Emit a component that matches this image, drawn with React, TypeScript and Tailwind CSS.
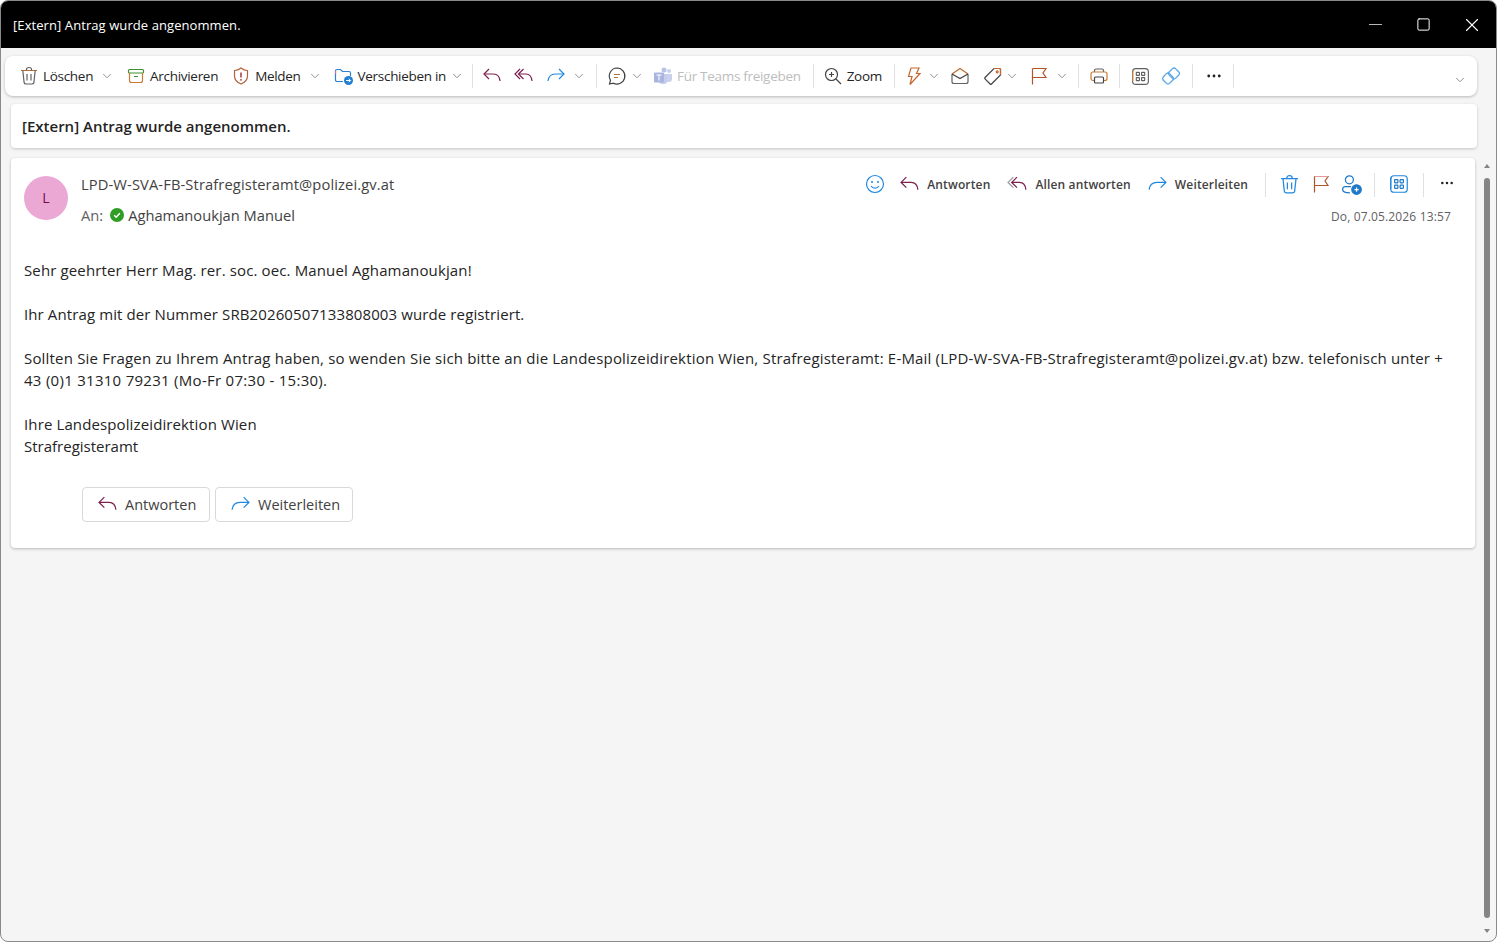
import React from "react";
import { Minus, Square, X, ChevronDown, MoreHorizontal } from "lucide-react";

const Sep = ({ ml, mr }: { ml: string; mr: string }) => (
  <div className={`h-[24px] w-px shrink-0 bg-[#e0e0e0] ${ml} ${mr}`} />
);

const Chev = ({ className = "" }: { className?: string }) => (
  <ChevronDown className={`w-[14px] h-[14px] shrink-0 text-[#616161] ${className}`} strokeWidth={1.2} />
);

const Trash = ({ className = "", stroke = "#616161", accent = "#b5713a" }: { className?: string; stroke?: string; accent?: string }) => (
  <svg viewBox="0 0 20 20" fill="none" className={className} strokeWidth="1.2">
    <path d="M2 4.500h16" stroke={accent} />
    <path d="M7.500 4.500V3.500a2.500 2 0 0 1 5 0v1" stroke={stroke} />
    <path d="M3.800 4.500l1.300 12a2 2 0 0 0 2 1.500h5.800a2 2 0 0 0 2-1.500l1.300-12" stroke={stroke} />
    <path d="M8 8v6.500M12 8v6.500" stroke={stroke} />
  </svg>
);

const Archive = ({ className = "" }: { className?: string }) => (
  <svg viewBox="0 0 20 20" fill="none" className={className} strokeWidth="1.2">
    <rect x="2.500" y="3.500" width="15" height="3.500" rx="1" stroke="#3f8f2f" />
    <path d="M3.500 7v7.500a2 2 0 0 0 2 2h9a2 2 0 0 0 2-2V7" stroke="#c77a34" />
    <path d="M8 10.500h4" stroke="#3f8f2f" />
  </svg>
);

const Shield = ({ className = "" }: { className?: string }) => (
  <svg viewBox="0 0 20 20" fill="none" className={className} strokeWidth="1.2">
    <path d="M10 2c2 1.700 4 2.500 6.500 2.500V10c0 3.600-2.200 6.200-6.500 8C5.700 16.200 3.500 13.600 3.500 10V4.500C6 4.500 8 3.700 10 2z" stroke="#b5613c" />
    <path d="M10 6.500v5" stroke="#a4262c" strokeWidth="1.400" />
    <circle cx="10" cy="13.800" r=".85" fill="#a4262c" />
  </svg>
);

const MoveFolder = ({ className = "" }: { className?: string }) => (
  <svg viewBox="0 0 20 20" fill="none" className={className} strokeWidth="1.2">
    <path d="M1.500 5a1.500 1.500 0 0 1 1.500-1.500h3.500L8.500 5.500H15A1.500 1.500 0 0 1 16.500 7v3M1.500 5v9A1.500 1.500 0 0 0 3 15.500h6" stroke="#2f80d0" />
    <path d="M1.500 5v3" stroke="#c07ab0" />
    <circle cx="14.500" cy="14.500" r="4.500" fill="#1f7fd4" />
    <path d="M12 14.500h4.500M14.800 12.700l1.800 1.800-1.800 1.800" stroke="#fff" strokeWidth="1" />
  </svg>
);

const Reply = ({ className = "", color = "#7d1f4f" }: { className?: string; color?: string }) => (
  <svg viewBox="0 0 20 20" fill="none" className={className} strokeWidth="1.200">
    <path d="M7 3L2 8l5 5" stroke={color} />
    <path d="M2 8h9.500c3.500 0 6 2 6.500 7" stroke={color} />
  </svg>
);

const ReplyAll = ({ className = "", back = "#7d1f4f", color = "#7d1f4f" }: { className?: string; back?: string; color?: string }) => (
  <svg viewBox="0 0 20 20" fill="none" className={className} strokeWidth="1.200">
    <path d="M6 3L1 8l5 5" stroke={back} />
    <path d="M9.500 3l-5 5 5 5" stroke={color} />
    <path d="M4.500 8h7.500c3.500 0 5.500 2 6 7" stroke={color} />
  </svg>
);

const Forward = ({ className = "" }: { className?: string }) => (
  <svg viewBox="0 0 20 20" fill="none" className={className} strokeWidth="1.200">
    <path d="M13 3l5 5-5 5" stroke="#1f88e0" />
    <path d="M18 8h-8.500C5.500 8 2.500 10.500 2 15" stroke="#1f88e0" />
  </svg>
);

const Chat = ({ className = "" }: { className?: string }) => (
  <svg viewBox="0 0 20 20" fill="none" className={className} strokeWidth="1.200">
    <path d="M10 2a8 8 0 1 1-3.600 15.200L2.500 18l1-3.800A8 8 0 0 1 10 2z" stroke="#424242" />
    <path d="M7 8.500h6M7 11.500h4" stroke="#b5713a" />
  </svg>
);

const Teams = ({ className = "" }: { className?: string }) => (
  <svg viewBox="0 0 20 20" className={className}>
    <circle cx="11" cy="4" r="2.500" fill="#b9c3e6" />
    <circle cx="16" cy="5" r="2" fill="#c9d1ee" />
    <path d="M13 8h6v5a3 3 0 0 1-3 3h-3z" fill="#c9d1ee" />
    <path d="M6 8h8v7a3 3 0 0 1-3 3H9a3 3 0 0 1-3-3z" fill="#c4cdeb" />
    <rect x="1" y="6.500" width="10" height="10" rx="1" fill="#a9b5e0" />
    <path d="M3.500 9h5M6 9v5.500" stroke="#fff" strokeWidth="1" />
  </svg>
);

const ZoomIcon = ({ className = "" }: { className?: string }) => (
  <svg viewBox="0 0 20 20" fill="none" className={className} strokeWidth="1.200" stroke="#424242">
    <circle cx="8.500" cy="8.500" r="6" />
    <path d="M13 13l5 5M8.500 6v5M6 8.500h5" />
  </svg>
);

const Bolt = ({ className = "" }: { className?: string }) => (
  <svg viewBox="0 0 20 20" fill="none" className={className} strokeWidth="1.200">
    <path d="M7 2h8l-2.500 5.500H16L6 18.500l2-8H4.500z" stroke="#c4682e" />
  </svg>
);

const OpenMail = ({ className = "" }: { className?: string }) => (
  <svg viewBox="0 0 20 20" fill="none" className={className} strokeWidth="1.200">
    <path d="M2 8v7.500a2 2 0 0 0 2 2h12a2 2 0 0 0 2-2V8" stroke="#616161" />
    <path d="M2 8l8-5.500L18 8" stroke="#c4682e" />
    <path d="M2 8l8 4.500L18 8" stroke="#424242" />
  </svg>
);

const Tag = ({ className = "" }: { className?: string }) => (
  <svg viewBox="0 0 20 20" fill="none" className={className} strokeWidth="1.200">
    <path d="M11 2.500h5.500a1 1 0 0 1 1 1V9l-9 9a1 1 0 0 1-1.400 0L2 12.900a1 1 0 0 1 0-1.400z" stroke="#424242" />
    <path d="M11 2.500h5.500a1 1 0 0 1 1 1V9" stroke="#c4682e" />
    <circle cx="14.200" cy="5.800" r="1" stroke="#c4682e" />
  </svg>
);

const Flag = ({ className = "", top = "#b0562a" }: { className?: string; top?: string }) => (
  <svg viewBox="0 0 20 20" fill="none" className={className} strokeWidth="1.200">
    <path d="M3.500 18.500V2.500" stroke="#b0562a" />
    <path d="M3.500 2.500H17l-3 4.500 3 4.500H3.500" stroke="#b0562a" />
    <path d="M4 2.500H17" stroke={top} />
  </svg>
);

const Printer = ({ className = "" }: { className?: string }) => (
  <svg viewBox="0 0 20 20" fill="none" className={className} strokeWidth="1.200">
    <path d="M5.500 6V4.500A1.500 1.500 0 0 1 7 3h6a1.500 1.500 0 0 1 1.500 1.500V6" stroke="#616161" />
    <path d="M5.500 14.500H4a2 2 0 0 1-2-2V8a2 2 0 0 1 2-2h12a2 2 0 0 1 2 2v4.500a2 2 0 0 1-2 2h-1.500" stroke="#c77a34" />
    <rect x="5.500" y="11" width="9" height="6" rx="1" stroke="#424242" />
  </svg>
);

const Apps = ({ className = "", stroke = "#616161", accent = "#c77a34", inner = "#616161" }: { className?: string; stroke?: string; accent?: string; inner?: string }) => (
  <svg viewBox="0 0 20 20" fill="none" className={className} strokeWidth="1.100">
    <rect x="2.500" y="2.500" width="15" height="15" rx="3" stroke={stroke} />
    <path d="M2.500 14.500v-9a3 3 0 0 1 .8-2" stroke={accent} />
    <rect x="6" y="6" width="3" height="3" rx=".5" stroke={inner} />
    <rect x="11" y="6" width="3" height="3" rx=".5" stroke={inner} />
    <rect x="6" y="11" width="3" height="3" rx=".5" stroke={inner} />
    <rect x="11" y="11" width="3" height="3" rx=".5" stroke={inner} />
  </svg>
);

const Loop = ({ className = "" }: { className?: string }) => (
  <svg viewBox="0 0 20 20" fill="none" className={className} strokeWidth="1.300" stroke="#5aa8ea">
    <rect x="8.500" y="3" width="9" height="9" rx="2.500" transform="rotate(45 13 7.500)" />
    <rect x="2.500" y="8" width="9" height="9" rx="2.500" transform="rotate(45 7 12.500)" />
  </svg>
);

const Smile = ({ className = "" }: { className?: string }) => (
  <svg viewBox="0 0 20 20" fill="none" className={className} strokeWidth="1.200" stroke="#1f88e0">
    <circle cx="10" cy="10" r="8.500" />
    <path d="M6 12c1 1.500 2.400 2.200 4 2.200s3-.7 4-2.200" />
    <circle cx="7" cy="8" r="1" fill="#1f88e0" stroke="none" />
    <circle cx="13" cy="8" r="1" fill="#1f88e0" stroke="none" />
  </svg>
);

const AddPerson = ({ className = "" }: { className?: string }) => (
  <svg viewBox="0 0 20 20" fill="none" className={className} strokeWidth="1.200" stroke="#1f78c8">
    <circle cx="8" cy="5.500" r="3.800" />
    <path d="M9.500 12H4a2.500 2.500 0 0 0-2.500 2.500c0 2 2.500 3.500 7 3.500" />
    <circle cx="14.800" cy="14.800" r="4.500" fill="#1f78c8" />
    <path d="M12.800 14.800h4M14.800 12.800v4" stroke="#fff" />
  </svg>
);

const tb = "h-[20px] w-[20px] shrink-0";
const hd = "-mt-[2px] h-[21px] w-[21px] shrink-0";

export default function App() {
  return (
    <div className="relative h-[942px] w-[1497px] overflow-hidden rounded-lg border border-[#8a8a8a] bg-[#f5f5f5] font-['Open_Sans',sans-serif] text-[#242424]">
      {/* title bar */}
      <div className="flex h-[47px] items-center bg-black pl-[12px] text-white">
        <span className="pt-[2px] text-[13px] tracking-[0.08px]">[Extern] Antrag wurde angenommen.</span>
        <div className="ml-auto flex items-center">
          <Minus className="mr-[30px] h-[21px] w-[21px] text-[#b8b8b8]" strokeWidth={1.2} />
          <Square className="mr-[30px] h-[15px] w-[15px] text-white" strokeWidth={1.6} />
          <X className="mr-[13px] h-[22px] w-[22px] text-white" strokeWidth={1.2} />
        </div>
      </div>

      {/* toolbar */}
      <div className="ml-[4px] mr-[19px] mt-[8px] flex h-[40px] items-center rounded-lg bg-white pl-[14px] text-[13.5px] tracking-[-0.3px] shadow-[0_1px_3px_rgba(0,0,0,0.25)]">
        <Trash className={tb} />
        <span className="ml-[4px]">Löschen</span>
        <Chev className="ml-[7px]" />
        <Archive className={`ml-[12px] ${tb}`} />
        <span className="ml-[4px]">Archivieren</span>
        <Shield className={`ml-[13px] ${tb}`} />
        <span className="ml-[4px]">Melden</span>
        <Chev className="ml-[7px]" />
        <MoveFolder className={`ml-[12px] ${tb}`} />
        <span className="ml-[4px]">Verschieben in</span>
        <Chev className="ml-[4px]" />
        <Sep ml="ml-[8px]" mr="mr-[9px]" />
        <Reply className={tb} />
        <ReplyAll className={`ml-[12px] ${tb}`} />
        <Forward className={`ml-[12px] ${tb}`} />
        <Chev className="ml-[6px]" />
        <Sep ml="ml-[10px]" mr="mr-[10px]" />
        <Chat className={tb} />
        <Chev className="ml-[3px]" />
        <Teams className={`ml-[9px] ${tb}`} />
        <span className="ml-[4px] text-[#bdbdbd]">Für Teams freigeben</span>
        <Sep ml="ml-[12px]" mr="mr-[9px]" />
        <ZoomIcon className={tb} />
        <span className="ml-[4px]">Zoom</span>
        <Sep ml="ml-[12px]" mr="mr-[9px]" />
        <Bolt className={tb} />
        <Chev className="ml-[3px]" />
        <OpenMail className={`ml-[9px] ${tb}`} />
        <Tag className={`ml-[13px] ${tb}`} />
        <Chev className="ml-[2px]" />
        <Flag className={`ml-[10px] ${tb}`} />
        <Chev className="ml-[6px]" />
        <Sep ml="ml-[9px]" mr="mr-[10px]" />
        <Printer className={tb} />
        <Sep ml="ml-[10px]" mr="mr-[10px]" />
        <Apps className="h-[21px] w-[21px] shrink-0" />
        <Loop className={`ml-[10px] ${tb}`} />
        <Sep ml="ml-[11px]" mr="mr-[12px]" />
        <MoreHorizontal className="h-[18px] w-[18px] shrink-0 text-[#242424]" strokeWidth={1.8} />
        <Sep ml="ml-[10px]" mr="mr-0" />
        <Chev className="ml-auto mr-[10px] mt-[8px]" />
      </div>

      {/* subject */}
      <div className="ml-[10px] mr-[19px] mt-[8px] flex h-[44px] items-center rounded-[4px] bg-white pl-[11px] pt-[1px] text-[15px] font-semibold shadow-[0_1px_3px_rgba(0,0,0,0.2)]">
        [Extern] Antrag wurde angenommen.
      </div>

      {/* message card */}
      <div className="ml-[10px] mr-[21px] mt-[10px] h-[390px] rounded-[4px] bg-white pl-[13px] pr-[24px] pt-[18px] shadow-[0_1px_3px_rgba(0,0,0,0.25)]">
        <div className="flex items-start">
          <div className="flex h-[44px] w-[44px] shrink-0 items-center justify-center rounded-full bg-[#eba8d5] pb-[2px] text-[14px] text-[#6b0f45]">
            L
          </div>
          <div className="ml-[13px] -mt-[2px]">
            <div className="h-[20px] text-[14.7px] leading-[20px] tracking-[0.12px] text-[#424242]">LPD-W-SVA-FB-Strafregisteramt@polizei.gv.at</div>
            <div className="mt-[11px] flex h-[20px] items-center text-[14.7px] text-[#616161]">
              <span>An:</span>
              <span className="ml-[7px] flex h-[14px] w-[14px] items-center justify-center rounded-full bg-[#2f9e24]">
                <svg viewBox="0 0 14 14" className="h-[14px] w-[14px]" fill="none" stroke="#fff" strokeWidth="1.500">
                  <path d="M4.200 7.200l2 2 3.600-4" />
                </svg>
              </span>
              <span className="ml-[4px] text-[#424242]">Aghamanoukjan Manuel</span>
            </div>
          </div>
          <div className="-mt-[8px] ml-auto flex flex-col items-end">
            <div className="-mr-[4px] flex h-[34px] items-center text-[12px] font-semibold tracking-[0.15px] text-[#424242]">
              <Smile className="-mt-[2px] h-[20px] w-[20px] shrink-0" />
              <Reply className={`ml-[14px] ${hd}`} />
              <span className="ml-[7px]">Antworten</span>
              <ReplyAll className={`ml-[17px] ${hd}`} back="#9a9a9a" />
              <span className="ml-[7px]">Allen antworten</span>
              <Forward className={`ml-[16px] ${hd}`} />
              <span className="ml-[7px]">Weiterleiten</span>
              <Sep ml="ml-[17px]" mr="mr-[13px]" />
              <Trash className={hd} stroke="#1f88e0" accent="#1f88e0" />
              <Flag className={`ml-[11px] h-[20px] w-[20px] shrink-0 -mt-[2px]`} top="#e29a9a" />
              <AddPerson className={`ml-[10px] ${hd}`} />
              <Sep ml="ml-[12px]" mr="mr-[13px]" />
              <Apps className="-mt-[2px] h-[22px] w-[22px] shrink-0" stroke="#1f88e0" accent="#1f88e0" inner="#1f78c8" />
              <Sep ml="ml-[13px]" mr="mr-[15px]" />
              <MoreHorizontal className="-mt-[4px] h-[16px] w-[16px] shrink-0 text-[#242424]" strokeWidth={1.8} />
            </div>
            <div className="mt-[6px] text-[12px] tracking-[0.15px] text-[#616161]">Do, 07.05.2026 13:57</div>
          </div>
        </div>

        <div className="mt-[33px] text-[15px] leading-[22px]">
          <p className="tracking-[0.13px]">Sehr geehrter Herr Mag. rer. soc. oec. Manuel Aghamanoukjan!</p>
          <p className="mt-[22px] tracking-[0.11px]">Ihr Antrag mit der Nummer SRB20260507133808003 wurde registriert.</p>
          <p className="mt-[22px] tracking-[0.185px]">
            Sollten Sie Fragen zu Ihrem Antrag haben, so wenden Sie sich bitte an die Landespolizeidirektion Wien, Strafregisteramt: E-Mail (LPD-W-SVA-FB-Strafregisteramt@polizei.gv.at) bzw. telefonisch unter +<br />
            <span className="tracking-[0.28px]">43 (0)1 31310 79231 (Mo-Fr 07:30 - 15:30).</span>
          </p>
          <p className="mt-[22px] tracking-[0.12px]">
            Ihre Landespolizeidirektion Wien
            <br />
            <span className="tracking-[0px]">Strafregisteramt</span>
          </p>
        </div>

        <div className="ml-[58px] mt-[30px] flex gap-[5px] text-[14.5px]">
          <button className="flex h-[35px] w-[128px] items-center rounded-[4px] border border-[#d9d9d9] pl-[14px] text-[#424242]">
            <Reply className="h-[21px] w-[21px]" />
            <span className="ml-[7px]">Antworten</span>
          </button>
          <button className="flex h-[35px] w-[138px] items-center rounded-[4px] border border-[#d9d9d9] pl-[14px] text-[#424242]">
            <Forward className="h-[21px] w-[21px]" />
            <span className="ml-[7px]">Weiterleiten</span>
          </button>
        </div>
      </div>

      {/* scrollbar */}
      <div className="absolute right-[6px] top-[177px] h-[740px] w-[6px] rounded-full bg-[#858585]" />
      <div className="absolute right-[6px] top-[163px] h-0 w-0 border-x-[3px] border-b-[4px] border-x-transparent border-b-[#858585]" />
      <div className="absolute bottom-[8px] right-[6px] h-0 w-0 border-x-[3px] border-t-[4px] border-x-transparent border-t-[#858585]" />
    </div>
  );
}
